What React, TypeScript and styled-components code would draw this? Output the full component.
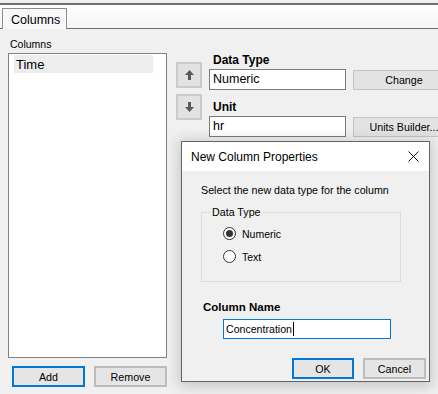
import React from 'react';
import styled, { createGlobalStyle } from 'styled-components';

const GlobalStyle = createGlobalStyle`
  html, body {
    margin: 0;
    padding: 0;
    background: #f0f0f0;
  }
  body {
    font-family: 'Liberation Sans', Arial, sans-serif;
    color: #000;
  }
`;

const Window = styled.div`
  position: relative;
  width: 438px;
  height: 394px;
  overflow: hidden;
  background: #f0f0f0;
`;

const TabBar = styled.div`
  margin-top: 3px;
  height: 23px;
  border-top: 2px solid #6f6f6f;
  border-bottom: 1px solid #6f6f6f;
  background: linear-gradient(#fdfdfd, #f5f5f5);
  padding-left: 2px;
  display: flex;
  align-items: flex-end;
`;

const Tab = styled.div`
  width: 65px;
  height: 21px;
  margin-bottom: -1px;
  border: 1px solid #8c8c8c;
  border-bottom: none;
  background: #f8f8f8;
  font-size: 12.5px;
  line-height: 22px;
  padding-left: 8px;
  box-sizing: border-box;
`;

const Content = styled.div`
  display: flex;
  padding-left: 8px;
`;

const LeftCol = styled.div`
  width: 160px;
  display: flex;
  flex-direction: column;
  padding-top: 9px;
`;

const SmallLabel = styled.div`
  font-size: 10.5px;
  line-height: 12px;
  padding-left: 2px;
`;

const ListBox = styled.div`
  margin-top: 3px;
  height: 305px;
  background: #fff;
  border: 1px solid #828282;
  box-sizing: border-box;
  padding: 1px 13px 0 5px;
`;

const ListItem = styled.div<{ $selected?: boolean }>`
  height: 18px;
  line-height: 19px;
  padding-left: 2px;
  font-size: 13px;
  background: ${(p) => (p.$selected ? '#ededed' : 'transparent')};
`;

const ButtonRow = styled.div`
  display: flex;
  gap: 9px;
  margin-top: 8px;
  padding-left: 4px;
`;

const Button = styled.button<{ $default?: boolean; $w?: number }>`
  width: ${(p) => p.$w ?? 73}px;
  height: 21px;
  flex: none;
  padding: 0;
  box-sizing: border-box;
  border: 2px solid ${(p) => (p.$default ? '#0078d7' : '#bdbdbd')};
  background: #e5e5e5;
  font-family: 'Liberation Sans', Arial, sans-serif;
  font-size: 10.7px;
  color: #000;
`;

const SideButton = styled.button`
  width: 102px;
  height: 20px;
  flex: none;
  padding: 0;
  box-sizing: border-box;
  border: 1px solid #c4c4c4;
  background: #e3e3e3;
  font-family: 'Liberation Sans', Arial, sans-serif;
  font-size: 10.7px;
  color: #000;
  white-space: nowrap;
  overflow: hidden;
`;

const RightArea = styled.div`
  display: flex;
  margin-left: 9px;
`;

const ArrowCol = styled.div`
  display: flex;
  flex-direction: column;
  gap: 6px;
  padding-top: 33px;
`;

const ArrowButton = styled.div`
  width: 26px;
  height: 26px;
  box-sizing: border-box;
  border: 2px solid #cbcbcb;
  background: #e2e2e2;
  display: flex;
  align-items: center;
  justify-content: center;
`;

const Fields = styled.div`
  display: flex;
  flex-direction: column;
  margin-left: 7px;
  padding-top: 24px;
`;

const BoldLabel = styled.div<{ $top?: number }>`
  font-size: 12px;
  font-weight: bold;
  line-height: 14px;
  padding-left: 4px;
  margin-top: ${(p) => p.$top ?? 0}px;
`;

const FieldRow = styled.div`
  display: flex;
  align-items: center;
  gap: 7px;
  margin-top: 2px;
`;

const TextBox = styled.div`
  width: 137px;
  height: 21px;
  box-sizing: border-box;
  border: 1px solid #7a7a7a;
  background: #fff;
  font-size: 12.5px;
  line-height: 19px;
  padding-left: 3px;
`;

const Dialog = styled.div`
  position: absolute;
  left: 181px;
  top: 141px;
  width: 249px;
  height: 241px;
  box-sizing: border-box;
  border: 1px solid #636363;
  background: #f0f0f0;
  box-shadow: 0 2px 12px 3px rgba(0, 0, 0, 0.16);
  display: flex;
  flex-direction: column;
`;

const TitleBar = styled.div`
  height: 29px;
  background: #fff;
  display: flex;
  align-items: center;
  justify-content: space-between;
  padding: 0 10px 0 9px;
  font-size: 12px;
`;

const DialogBody = styled.div`
  flex: 1;
  display: flex;
  flex-direction: column;
  padding: 13px 3px 0 19px;
`;

const DialogText = styled.div`
  font-size: 10.7px;
  line-height: 13px;
`;

const GroupBox = styled.fieldset`
  margin: 9px 0 0 0;
  width: 200px;
  height: 76px;
  box-sizing: border-box;
  border: 1px solid #dcdcdc;
  padding: 9px 0 0 21px;
  display: flex;
  flex-direction: column;
  gap: 10px;
`;

const Legend = styled.legend`
  font-size: 10.7px;
  line-height: 12px;
  padding: 0 2px;
  margin-left: -13px;
`;

const RadioRow = styled.div`
  display: flex;
  align-items: center;
  gap: 6px;
  font-size: 10.5px;
  height: 13px;
`;

const RadioCircle = styled.span<{ $checked?: boolean }>`
  width: 13px;
  height: 13px;
  box-sizing: border-box;
  border-radius: 50%;
  border: 1px solid #333;
  background: #fff;
  display: flex;
  align-items: center;
  justify-content: center;

  &::after {
    content: '';
    width: 7px;
    height: 7px;
    border-radius: 50%;
    background: ${(p) => (p.$checked ? '#333' : 'transparent')};
  }
`;

const NameLabel = styled.div`
  margin-top: 18px;
  padding-left: 2px;
  font-size: 11.5px;
  font-weight: bold;
  line-height: 14px;
`;

const NameBox = styled.div`
  margin: 5px 0 0 22px;
  width: 168px;
  height: 20px;
  box-sizing: border-box;
  border: 1px solid #0078d7;
  background: #fff;
  font-size: 10.6px;
  line-height: 18px;
  padding-left: 2px;
  display: flex;
  align-items: center;
`;

const Caret = styled.span`
  width: 1px;
  height: 14px;
  background: #000;
  margin-left: 1px;
`;

const DialogButtons = styled.div`
  display: flex;
  justify-content: flex-end;
  gap: 9px;
  margin-top: 19px;
`;

const Arrow = ({ down }: { down?: boolean }) => (
  <svg width="9" height="10" viewBox="0 0 9 10" style={down ? { transform: 'rotate(180deg)' } : undefined}>
    <path d="M4.5 0 L9 5 L6 5 L6 10 L3 10 L3 5 L0 5 Z" fill="#5a5a5a" />
  </svg>
);

const CloseIcon = () => (
  <svg width="11" height="11" viewBox="0 0 11 11">
    <path d="M0.5 0.5 L10.5 10.5 M10.5 0.5 L0.5 10.5" stroke="#111" strokeWidth="1" />
  </svg>
);

export default function App() {
  return (
    <Window>
      <GlobalStyle />
      <TabBar>
        <Tab>Columns</Tab>
      </TabBar>
      <Content>
        <LeftCol>
          <SmallLabel>Columns</SmallLabel>
          <ListBox>
            <ListItem $selected>Time</ListItem>
          </ListBox>
          <ButtonRow>
            <Button $default>Add</Button>
            <Button>Remove</Button>
          </ButtonRow>
        </LeftCol>
        <RightArea>
          <ArrowCol>
            <ArrowButton>
              <Arrow />
            </ArrowButton>
            <ArrowButton>
              <Arrow down />
            </ArrowButton>
          </ArrowCol>
          <Fields>
            <BoldLabel>Data Type</BoldLabel>
            <FieldRow>
              <TextBox>Numeric</TextBox>
              <SideButton>Change</SideButton>
            </FieldRow>
            <BoldLabel $top={10}>Unit</BoldLabel>
            <FieldRow>
              <TextBox>hr</TextBox>
              <SideButton>Units Builder...</SideButton>
            </FieldRow>
          </Fields>
        </RightArea>
      </Content>

      <Dialog>
        <TitleBar>
          <span>New Column Properties</span>
          <CloseIcon />
        </TitleBar>
        <DialogBody>
          <DialogText>Select the new data type for the column</DialogText>
          <GroupBox>
            <Legend>Data Type</Legend>
            <RadioRow>
              <RadioCircle $checked />
              Numeric
            </RadioRow>
            <RadioRow>
              <RadioCircle />
              Text
            </RadioRow>
          </GroupBox>
          <NameLabel>Column Name</NameLabel>
          <NameBox>
            Concentration
            <Caret />
          </NameBox>
          <DialogButtons>
            <Button $default $w={62}>OK</Button>
            <Button $w={63}>Cancel</Button>
          </DialogButtons>
        </DialogBody>
      </Dialog>
    </Window>
  );
}
